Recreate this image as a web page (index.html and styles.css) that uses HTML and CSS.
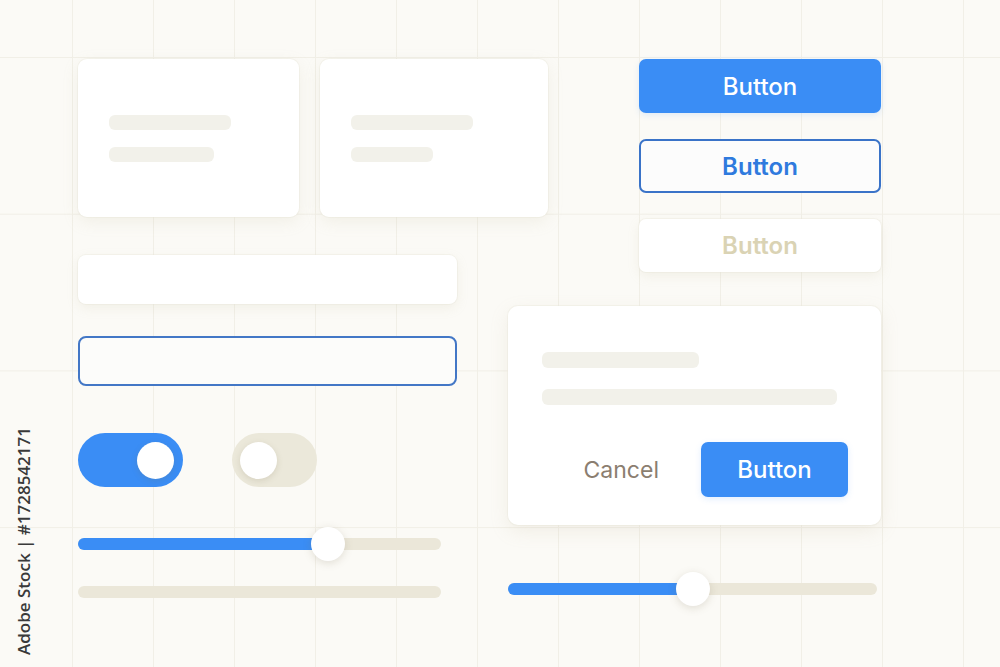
FILE: index.html
```html
<!DOCTYPE html>
<html lang="en">
<head>
    <meta charset="UTF-8">
    <meta name="viewport" content="width=device-width, initial-scale=1.0">
    <title>UI Kit</title>
    <link rel="stylesheet" href="styles.css">
</head>
<body>

<div class="board">
    <!-- left column: cards, inputs, toggles, sliders -->
    <div class="col-left">
        <div class="cards">
            <div class="card card-a">
                <span class="bar bar-long"></span>
                <span class="bar bar-short"></span>
            </div>
            <div class="card card-b">
                <span class="bar bar-long"></span>
                <span class="bar bar-shorter"></span>
            </div>
        </div>

        <div class="field"></div>
        <div class="field field-focus"></div>

        <div class="toggles">
            <div class="toggle toggle-on"><span class="knob"></span></div>
            <div class="toggle toggle-off"><span class="knob"></span></div>
        </div>

        <div class="slider slider-one">
            <div class="fill" style="width: 69%"></div>
            <span class="thumb" style="left: 69%"></span>
        </div>
        <div class="slider slider-two"></div>
    </div>

    <!-- right column: buttons, dialog, slider -->
    <div class="col-right">
        <div class="buttons">
            <button class="btn btn-primary">Button</button>
            <button class="btn btn-outline">Button</button>
            <button class="btn btn-disabled">Button</button>
        </div>

        <div class="dialog">
            <span class="bar dialog-title"></span>
            <span class="bar dialog-text"></span>
            <div class="dialog-actions">
                <span class="cancel">Cancel</span>
                <button class="btn btn-primary btn-small">Button</button>
            </div>
        </div>

        <div class="slider slider-three">
            <div class="fill" style="width: 50%"></div>
            <span class="thumb" style="left: 50%"></span>
        </div>
    </div>
</div>

<div class="stock-id">Adobe Stock | #1728542171</div>

</body>
</html>
```

FILE: styles.css
```css
html, body {
    height: 100%;
}
body {
    margin: 0;
    font-family: Inter, "Open Sans", sans-serif;
    background-color: #fbfaf6;
    background-image:
        linear-gradient(to right, #f1efe7 1px, transparent 1px),
        linear-gradient(to bottom, #f1efe7 1px, transparent 1px);
    background-size: 81px 156.7px;
    background-position: 72px 57px;
    overflow: hidden;
}
.board {
    display: flex;
    padding: 59px 0 0 78px;
}
.col-left {
    width: 430px;
    display: flex;
    flex-direction: column;
}
.col-right {
    width: 373px;
    display: flex;
    flex-direction: column;
}

/* cards */
.cards {
    display: flex;
    gap: 21px;
    width: 470px;
    height: 158px;
}
.card {
    background: #fff;
    border-radius: 9px;
    box-shadow: 0 5px 16px rgba(190, 180, 150, 0.15), 0 0 0 1px rgba(238, 235, 224, 0.4);
    display: flex;
    flex-direction: column;
    gap: 17px;
    padding: 56px 0 0 31px;
    box-sizing: border-box;
}
.card-a {
    width: 221px;
}
.card-b {
    width: 228px;
}
.bar {
    display: block;
    height: 15px;
    border-radius: 6px;
    background: #f2f1ea;
}
.bar-long {
    width: 122px;
}
.bar-short {
    width: 105px;
}
.bar-shorter {
    width: 82px;
}

/* inputs */
.field {
    width: 379px;
    height: 49px;
    margin-top: 38px;
    background: #fff;
    border-radius: 8px;
    box-shadow: 0 4px 12px rgba(190, 180, 150, 0.15), 0 0 0 1px rgba(238, 235, 224, 0.4);
}
.field-focus {
    height: 50px;
    margin-top: 32px;
    box-sizing: border-box;
    background: #fcfcfa;
    border: 2px solid #4377c6;
    box-shadow: none;
}

/* toggles */
.toggles {
    display: flex;
    gap: 49px;
    margin-top: 47px;
}
.toggle {
    height: 54px;
    border-radius: 27px;
    display: flex;
    align-items: center;
    box-sizing: border-box;
}
.toggle-on {
    width: 105px;
    background: #3a8df5;
    justify-content: flex-end;
    padding-right: 9px;
}
.toggle-off {
    width: 85px;
    background: #ebe8da;
    padding-left: 8px;
}
.knob {
    width: 37px;
    height: 37px;
    border-radius: 50%;
    background: #fff;
    box-shadow: 0 2px 6px rgba(120, 110, 80, 0.18);
}

/* sliders */
.slider {
    position: relative;
    height: 12px;
    border-radius: 6px;
    background: #ebe7d9;
}
.slider .fill {
    height: 100%;
    border-radius: 6px;
    background: #3a8df5;
}
.slider .thumb {
    position: absolute;
    top: 50%;
    width: 34px;
    height: 34px;
    margin: -17px 0 0 -17px;
    border-radius: 50%;
    background: #fff;
    box-shadow: 0 2px 8px rgba(120, 110, 80, 0.2);
}
.slider-one {
    width: 363px;
    margin-top: 51px;
}
.slider-two {
    width: 363px;
    margin-top: 36px;
}
.slider-three {
    width: 369px;
    margin-top: 58px;
}

/* buttons */
.buttons {
    display: flex;
    flex-direction: column;
    gap: 26px;
    margin-left: 131px;
    width: 242px;
}
.btn {
    height: 54px;
    border-radius: 7px;
    font-family: Inter, "Open Sans", sans-serif;
    font-size: 24px;
    font-weight: 500;
    border: none;
    padding: 0;
}
.btn-primary {
    background: #3a8df5;
    color: #fff;
    box-shadow: 0 2px 6px rgba(58, 141, 245, 0.15);
}
.btn-outline {
    background: #fcfcfc;
    color: #2f7ade;
    border: 2px solid #3a73c8;
    font-weight: 600;
}
.btn-disabled {
    height: 53px;
    background: #fff;
    color: #dad3b4;
    font-weight: 600;
    box-shadow: 0 4px 12px rgba(190, 180, 150, 0.15), 0 0 0 1px rgba(238, 235, 224, 0.4);
}

/* dialog */
.dialog {
    margin-top: 34px;
    height: 219px;
    box-sizing: border-box;
    padding: 46px 33px 0 34px;
    background: #fff;
    border-radius: 10px;
    box-shadow: 0 6px 18px rgba(190, 180, 150, 0.17), 0 0 0 1px rgba(238, 235, 224, 0.4);
    display: flex;
    flex-direction: column;
}
.dialog .bar {
    height: 16px;
}
.dialog-title {
    width: 157px;
}
.dialog-text {
    width: 295px;
    margin-top: 21px;
}
.dialog-actions {
    display: flex;
    justify-content: flex-end;
    align-items: center;
    gap: 42px;
    margin-top: 37px;
}
.cancel {
    font-size: 23px;
    color: #8b7e70;
}
.btn-small {
    width: 147px;
    height: 55px;
}

.stock-id {
    position: absolute;
    left: 12px;
    bottom: 12px;
    writing-mode: vertical-rl;
    transform: rotate(180deg);
    font-family: "Open Sans", sans-serif;
    font-size: 17px;
    font-weight: 600;
    color: #3a3a3a;
}
```
